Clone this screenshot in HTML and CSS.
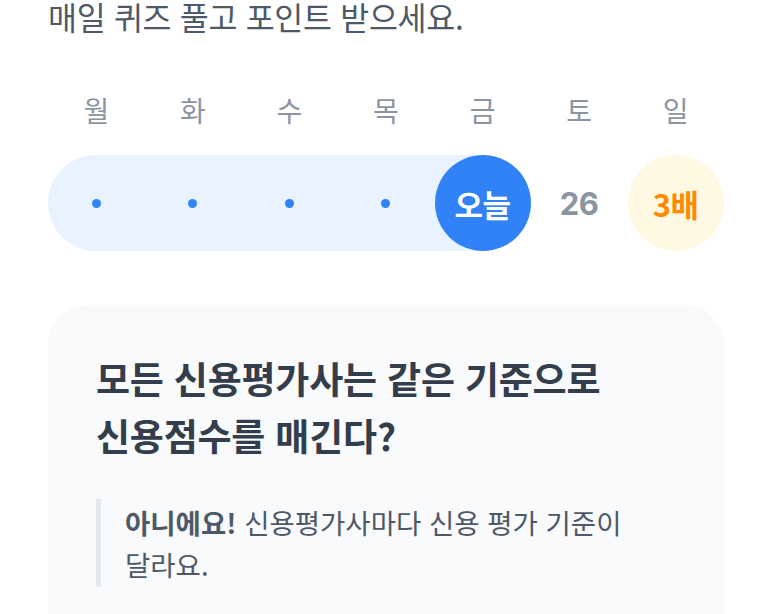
FILE: index.html
```html
<!DOCTYPE html>
<html lang="ko">
<head>
<meta charset="utf-8">
<link rel="stylesheet" href="styles.css">
</head>
<body>
<main class="page">
  <p class="lead">매일 퀴즈 풀고 포인트 받으세요.</p>
  <div class="days">
    <span>월</span><span>화</span><span>수</span><span>목</span><span>금</span><span>토</span><span>일</span>
  </div>
  <div class="track">
    <div class="progress"></div>
    <div class="cell"><i class="dot"></i></div>
    <div class="cell"><i class="dot"></i></div>
    <div class="cell"><i class="dot"></i></div>
    <div class="cell"><i class="dot"></i></div>
    <div class="cell"><span class="today">오늘</span></div>
    <div class="cell"><span class="num">26</span></div>
    <div class="cell"><span class="bonus">3배</span></div>
  </div>
  <section class="card">
    <h2 class="question">모든 신용평가사는 같은 기준으로<br>신용점수를 매긴다?</h2>
    <blockquote class="answer"><strong>아니에요!</strong> 신용평가사마다 신용 평가 기준이 달라요.</blockquote>
  </section>
</main>
</body>
</html>
```
FILE: styles.css
```css
html, body {
  margin: 0;
  padding: 0;
  background: #ffffff;
  font-family: "Noto Sans CJK KR", "Noto Sans", sans-serif;
}
.page {
  padding: 0 49px 0 48px;
}
.lead {
  margin: -5px 0 0;
  font-size: 31.5px;
  line-height: 42px;
  color: #4e5968;
  letter-spacing: -0.3px;
}
.days {
  display: grid;
  grid-template-columns: repeat(7, 1fr);
  margin-top: 55px;
  font-size: 28px;
  line-height: 36px;
  color: #8b95a1;
  text-align: center;
}
.track {
  position: relative;
  display: grid;
  grid-template-columns: repeat(7, 1fr);
  margin-top: 27px;
  height: 96px;
}
.progress {
  position: absolute;
  left: 0;
  top: 0;
  bottom: 0;
  width: calc(100% * 5 / 7);
  background: #e8f3ff;
  border-radius: 48px;
}
.cell {
  position: relative;
  display: flex;
  align-items: center;
  justify-content: center;
}
.dot {
  width: 9px;
  height: 9px;
  border-radius: 50%;
  background: #3182f6;
}
.today, .bonus {
  width: 96px;
  height: 96px;
  border-radius: 50%;
  display: flex;
  align-items: center;
  justify-content: center;
  font-size: 31px;
  font-weight: 700;
  letter-spacing: -0.5px;
}
.today {
  background: #3182f6;
  color: #ffffff;
}
.bonus {
  background: #fff8e3;
  color: #ff8a00;
}
.num {
  font-family: "Inter", "Noto Sans", sans-serif;
  font-size: 31px;
  font-weight: 700;
  color: #8b95a1;
  letter-spacing: -0.5px;
}
.card {
  margin-top: 54px;
  background: #f9fafb;
  border-radius: 40px;
  padding: 45px 48px 40px;
  min-height: 300px;
}
.question {
  margin: 0;
  font-size: 37px;
  line-height: 57px;
  font-weight: 700;
  color: #333d4b;
  letter-spacing: -0.2px;
}
.answer {
  margin: 35px 0 0;
  padding: 2px 20px 2px 24px;
  border-left: 5px solid #e5e8eb;
  font-size: 27.5px;
  line-height: 42px;
  color: #4e5968;
  word-break: keep-all;
}
.answer strong {
  font-weight: 700;
}
```
